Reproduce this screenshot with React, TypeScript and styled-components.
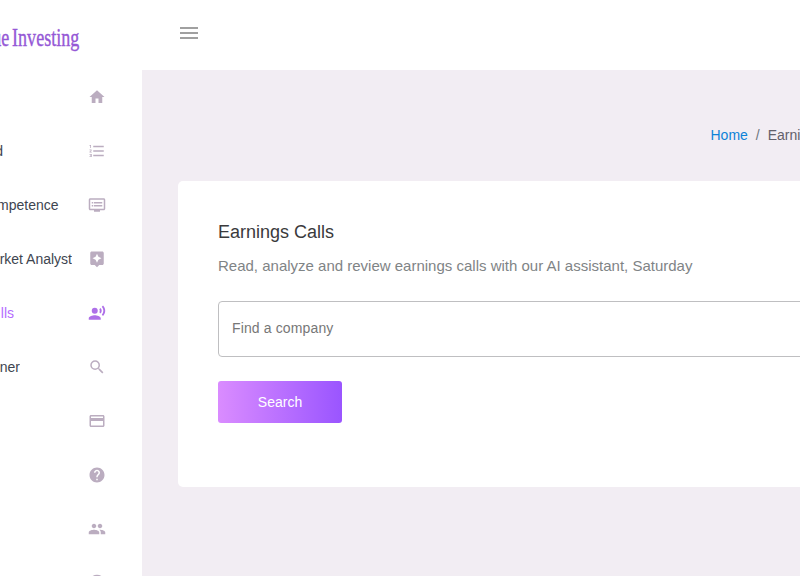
import React from "react";
import styled, { createGlobalStyle } from "styled-components";

const Global = createGlobalStyle`
  * { box-sizing: border-box; }
  html, body { margin: 0; width: 100%; height: 100%; overflow: hidden; background: #fff; }
  body { font-family: "Liberation Sans", Arial, sans-serif; color: #3e4b5b; }
`;
const Page = styled.div`
  display: flex;
  flex-direction: column;
  width: 800px;
  height: 576px;
  overflow: hidden;
`;
const Header = styled.header`
  display: flex;
  flex: none;
  height: 70px;
  background: #fff;
`;
const Brand = styled.div`
  display: flex;
  justify-content: flex-end;
  width: 142px;
  height: 70px;
  padding: 23px 63px 0 0;
  overflow: hidden;
`;
const Logo = styled.span`
  flex: none;
  font: 26px/30px "Liberation Serif", serif;
  color: #9558d6;
  white-space: nowrap;
  word-spacing: -2.5px;
  transform: scaleX(0.695);
  transform-origin: right center;
  -webkit-text-stroke: 0.4px #9558d6;
`;
const MenuButton = styled.button`
  display: flex;
  flex-direction: column;
  gap: 3px;
  width: 18px;
  height: 12px;
  margin: 27px 0 0 38px;
  padding: 0;
  border: 0;
  background: none;
`;
const MenuLine = styled.span`
  display: block;
  height: 2px;
  background: #a0a0a0;
`;
const Body = styled.div`
  display: flex;
  flex: 1;
  min-height: 0;
`;
const Sidebar = styled.nav`
  flex: none;
  width: 142px;
  overflow: hidden;
  background: #fff;
`;
const Item = styled.a<{ $active?: boolean }>`
  display: flex;
  align-items: center;
  height: 54px;
  color: ${(p) => (p.$active ? "#b66dff" : "#3e4550")};
  svg {
    flex: none;
    width: 18px;
    height: 18px;
    margin-left: auto;
    margin-right: 36px;
    fill: ${(p) => (p.$active ? "#ae70e8" : "#bbadc0")};
  }
`;
const ItemLabel = styled.span<{ $end: number }>`
  display: flex;
  justify-content: flex-end;
  width: ${(p) => p.$end}px;
  overflow: hidden;
  font-size: 14px;
  line-height: 18px;
  white-space: nowrap;
`;
const Main = styled.main`
  flex: 1;
  min-width: 0;
  padding-left: 36px;
  overflow: hidden;
  background: #f2edf3;
`;
const Breadcrumb = styled.div`
  display: flex;
  height: 111px;
  padding: 57px 0 0 532.5px;
  font-size: 14px;
  line-height: 16px;
  color: #62606a;
  white-space: nowrap;
`;
const HomeLink = styled.a`
  color: #0d82d8;
`;
const Slash = styled.span`
  margin: 0 8px;
  color: #6c757d;
`;
const Card = styled.section`
  width: 900px;
  height: 306px;
  padding: 40px;
  border-radius: 5px;
  background: #fff;
`;
const Title = styled.h4`
  margin: 0;
  font-size: 18px;
  font-weight: 400;
  line-height: 22px;
  color: #3a3a3c;
`;
const Description = styled.p`
  margin: 13px 0 0;
  font-size: 15px;
  line-height: 20px;
  color: #7f8486;
`;
const Field = styled.input`
  display: block;
  width: 100%;
  height: 56px;
  margin: 25px 0 24px;
  padding: 0 13px 2px;
  border: 1px solid #bfbfc1;
  border-radius: 4px;
  background: #fff;
  font: 14px "Liberation Sans", Arial, sans-serif;
  letter-spacing: 0.13px;
  &::placeholder { color: #777; opacity: 1; }
`;
const Search = styled.button`
  display: block;
  width: 124px;
  height: 42px;
  padding: 0;
  border: 0;
  border-radius: 3px;
  background: linear-gradient(to right, #da8cff, #9a55ff);
  font: 14px "Liberation Sans", Arial, sans-serif;
  color: #fff;
`;

const items = [
  { label: "", end: 0, path: "M10,20V14H14V20H19V12H22L12,3L2,12H5V20H10Z" },
  { label: "d", end: 3, path: "M7,13V11H21V13H7M7,19V17H21V19H7M7,7V5H21V7H7M3,8V5H2V4H4V8H3M2,17V16H5V20H2V19H4V18.5H3V17.5H4V17H2M4.25,10A0.75,0.75 0 0,1 5,10.75C5,10.95 4.92,11.14 4.79,11.27L3.12,13H5V14H2V13.08L4,11H2V10H4.25Z" },
  { label: "mpetence", end: 58.5, path: "M21 3H3c-1.1 0-2 .9-2 2v12c0 1.1.9 2 2 2h5v2h8v-2h5c1.1 0 1.99-.9 1.99-2L23 5c0-1.1-.9-2-2-2zm0 14H3V5h18v12zm-2-9H8v2h11V8zm0 4H8v2h11v-2zM7 8H5v2h2V8zm0 4H5v2h2v-2z" },
  { label: "rket Analyst", end: 72, path: "M19 2H5c-1.11 0-2 .9-2 2v14c0 1.1.89 2 2 2h4l3 3 3-3h4c1.1 0 2-.9 2-2V4c0-1.1-.9-2-2-2zm-5.12 10.88L12 17l-1.88-4.12L6 11l4.12-1.88L12 5l1.88 4.12L18 11l-4.12 1.88z" },
  { label: "lls", end: 14, active: true, path: "M9 5a4 4 0 1 0 0 8a4 4 0 1 0 0-8zM9 15c-2.67 0-8 1.34-8 4v2h16v-2c0-2.66-5.33-4-8-4zm7.76-9.64l-1.68 1.69c.84 1.18.84 2.71 0 3.89l1.68 1.69c2.02-2.02 2.02-5.07 0-7.27zM20.07 2l-1.63 1.63c2.77 3.02 2.77 7.56 0 10.74L20.07 16c3.9-3.89 3.91-9.95 0-14z" },
  { label: "ner", end: 20, path: "M9.5,3A6.5,6.5 0 0,1 16,9.5C16,11.11 15.41,12.59 14.44,13.73L14.71,14H15.5L20.5,19L19,20.5L14,15.5V14.71L13.73,14.44C12.59,15.41 11.11,16 9.5,16A6.5,6.5 0 0,1 3,9.5A6.5,6.5 0 0,1 9.5,3M9.5,5C7,5 5,7 5,9.5C5,12 7,14 9.5,14C12,14 14,12 14,9.5C14,7 12,5 9.5,5Z" },
  { label: "", end: 0, path: "M20 4H4c-1.11 0-1.99.89-1.99 2L2 18c0 1.11.89 2 2 2h16c1.11 0 2-.89 2-2V6c0-1.11-.89-2-2-2zm0 14H4v-6h16v6zm0-10H4V6h16v2z" },
  { label: "", end: 0, path: "M12 2C6.48 2 2 6.48 2 12s4.48 10 10 10 10-4.48 10-10S17.52 2 12 2zm1 17h-2v-2h2v2zm2.07-7.75l-.9.92C13.45 12.9 13 13.5 13 15h-2v-.5c0-1.1.45-2.1 1.17-2.83l1.24-1.26c.37-.36.59-.86.59-1.41 0-1.1-.9-2-2-2s-2 .9-2 2H8c0-2.21 1.79-4 4-4s4 1.79 4 4c0 .88-.36 1.68-.93 2.25z" },
  { label: "", end: 0, path: "M16 11c1.66 0 2.99-1.34 2.99-3S17.66 5 16 5c-1.66 0-3 1.34-3 3s1.34 3 3 3zm-8 0c1.66 0 2.99-1.34 2.99-3S9.66 5 8 5C6.34 5 5 6.34 5 8s1.34 3 3 3zm0 2c-2.33 0-7 1.17-7 3.5V19h14v-2.5c0-2.33-4.67-3.5-7-3.5zm8 0c-.29 0-.62.02-.97.05 1.16.84 1.97 1.97 1.97 3.45V19h6v-2.5c0-2.33-4.67-3.5-7-3.5z" },
  { label: "", end: 0, path: "M12,1A11,11 0 0,0 1,12A11,11 0 0,0 12,23A11,11 0 0,0 23,12A11,11 0 0,0 12,1M12,3A9,9 0 0,1 21,12A9,9 0 0,1 12,21A9,9 0 0,1 3,12A9,9 0 0,1 12,3Z" },
];

export default function App() {
  return (
    <Page>
      <Global />
      <Header>
        <Brand><Logo>ue Investing</Logo></Brand>
        <MenuButton aria-label="Menu"><MenuLine /><MenuLine /><MenuLine /></MenuButton>
      </Header>
      <Body>
        <Sidebar>
          {items.map((item, i) => (
            <Item key={i} $active={item.active}>
              {item.label && <ItemLabel $end={item.end}>{item.label}</ItemLabel>}
              <svg viewBox="0 0 24 24" aria-hidden="true"><path d={item.path} /></svg>
            </Item>
          ))}
        </Sidebar>
        <Main>
          <Breadcrumb><HomeLink>Home</HomeLink><Slash>/</Slash><span>Earnings Calls</span></Breadcrumb>
          <Card>
            <Title>Earnings Calls</Title>
            <Description>Read, analyze and review earnings calls with our AI assistant, Saturday</Description>
            <Field placeholder="Find a company" />
            <Search>Search</Search>
          </Card>
        </Main>
      </Body>
    </Page>
  );
}
